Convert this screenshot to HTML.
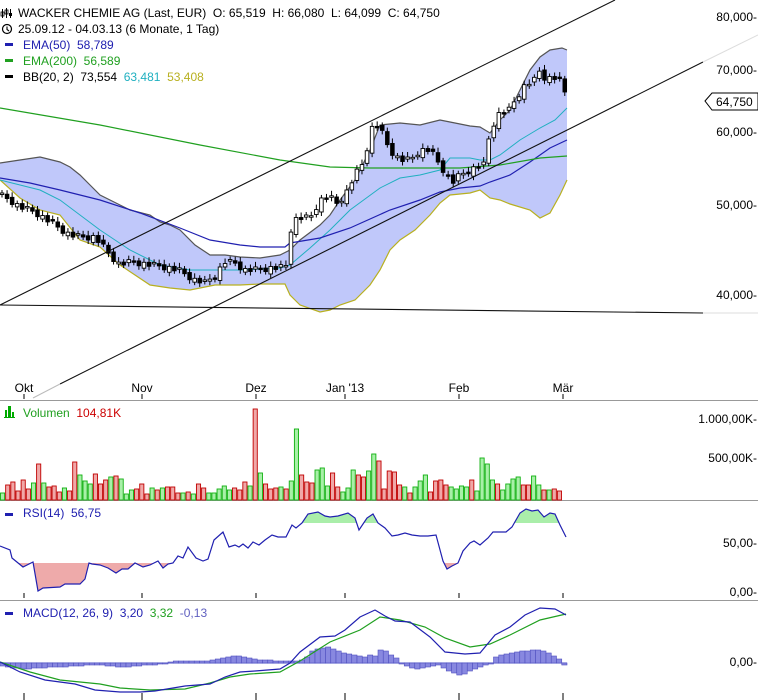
<!DOCTYPE html>
<html><head><meta charset="utf-8"><style>
html,body{margin:0;padding:0;background:#fff;width:758px;height:700px;overflow:hidden}
svg{display:block;font-family:"Liberation Sans",sans-serif;font-size:12px}
</style></head><body>
<svg id="s" width="758" height="700" viewBox="0 0 758 700" xmlns="http://www.w3.org/2000/svg">
<defs>
<clipPath id="cr"><rect x="0" y="563" width="758" height="40"/></clipPath>
<clipPath id="cg"><rect x="0" y="500" width="758" height="23"/></clipPath>
</defs>
<path fill="#c0c8fa" stroke="none" d="M0,163 L20,160 40,157 60,162 70,167 80,175 90,185 100,195 110,200 130,210 150,215 160,222 170,225 180,230 195,245 210,255 225,255 240,257 260,258 280,255 290,250 300,240 320,225 330,215 340,200 355,180 370,150 380,125 400,123 420,125 440,120 450,122 470,126 480,127 490,133 500,120 510,110 520,90 530,70 540,57 550,50 562,48 567,50 L567,180 560,195 550,213 540,218 530,210 510,204 500,200 490,198 480,190 470,193 460,194 450,195 440,203 430,215 415,230 400,240 390,250 380,270 370,285 355,300 340,305 330,310 320,312 300,305 290,295 285,284 260,284 240,285 215,285 200,288 190,290 170,288 150,285 135,275 120,265 100,247 80,240 60,215 40,210 20,198 0,180 Z"/>
<polyline fill="none" stroke="#555" stroke-width="1.2" points="0,163 20,160 40,157 60,162 70,167 80,175 90,185 100,195 110,200 130,210 150,215 160,222 170,225 180,230 195,245 210,255 225,255 240,257 260,258 280,255 290,250 300,240 320,225 330,215 340,200 355,180 370,150 380,125 400,123 420,125 440,120 450,122 470,126 480,127 490,133 500,120 510,110 520,90 530,70 540,57 550,50 562,48 567,50"/>
<polyline fill="none" stroke="#b8b020" stroke-width="1.2" points="0,180 20,198 40,210 60,215 80,240 100,247 120,265 135,275 150,285 170,288 190,290 200,288 215,285 240,285 260,284 285,284 290,295 300,305 320,312 330,310 340,305 355,300 370,285 380,270 390,250 400,240 415,230 430,215 440,203 450,195 460,194 470,193 480,190 490,198 500,200 510,204 530,210 540,218 550,213 560,195 567,180"/>
<polyline fill="none" stroke="#20b0c0" stroke-width="1" points="0,180 40,190 60,200 100,230 130,250 160,265 190,270 210,270 240,270 280,268 290,265 310,248 330,230 350,210 380,188 400,178 420,175 440,170 450,158 470,158 480,160 490,160 500,155 520,140 540,128 555,120 567,108"/>
<polyline fill="none" stroke="#2020b0" stroke-width="1.2" points="0,178 30,183 60,190 100,200 140,213 180,228 210,240 240,245 260,247 285,247 290,243 320,238 350,228 390,210 420,200 440,192 460,188 480,186 490,182 510,175 530,162 550,148 567,140"/>
<polyline fill="none" stroke="#20a020" stroke-width="1.2" points="0,108 100,125 200,145 280,160 330,167 370,168 420,168 460,168 500,165 540,158 567,156"/>
<g id="candles"></g>
<line x1="0" y1="305" x2="615" y2="0" stroke="#111" stroke-width="1.1"/>
<line x1="60" y1="384" x2="703" y2="62" stroke="#111" stroke-width="1.1"/>
<line x1="33" y1="398" x2="60" y2="384" stroke="#bbb" stroke-width="1"/>
<line x1="703" y1="62" x2="758" y2="35" stroke="#ddd" stroke-width="1"/>
<line x1="0" y1="305" x2="703" y2="313" stroke="#111" stroke-width="1.1"/>
<line x1="703" y1="313" x2="758" y2="313" stroke="#ddd" stroke-width="1"/>
<g fill="#000">
<rect x="2" y="9" width="1" height="9"/><rect x="1" y="12" width="3" height="4" fill="none" stroke="#000" stroke-width="0.8"/>
<rect x="6" y="8" width="1" height="10"/><rect x="5" y="10" width="3" height="4" fill="none" stroke="#000" stroke-width="0.8"/>
<rect x="10" y="9" width="1" height="9"/><rect x="9" y="13" width="3" height="3"/>
<text x="18" y="17" xml:space="preserve">WACKER CHEMIE AG (Last, EUR)  O: 65,519  H: 66,080  L: 64,099  C: 64,750</text>
<circle cx="7" cy="29" r="4.5" fill="none" stroke="#000" stroke-width="1.2"/><path d="M7,26.5V29.5L9,31" fill="none" stroke="#000" stroke-width="1.1"/>
<text x="18" y="33">25.09.12 - 04.03.13 (6 Monate, 1 Tag)</text>
</g>
<rect x="5" y="43" width="8" height="3" fill="#2020b0"/><text x="23" y="49" fill="#2020b0" xml:space="preserve">EMA(50)  58,789</text>
<rect x="5" y="59" width="8" height="3" fill="#20a020"/><text x="23" y="65" fill="#20a020" xml:space="preserve">EMA(200)  56,589</text>
<rect x="5" y="75" width="8" height="3" fill="#000"/><text x="23" y="81" fill="#000" xml:space="preserve">BB(20, 2)  73,554  <tspan fill="#20b0c0">63,481</tspan>  <tspan fill="#b8b020">53,408</tspan></text>
<g text-anchor="end" fill="#000">
<text x="757" y="21">80,000-</text>
<text x="757" y="74">70,000-</text>
<text x="757" y="136">60,000-</text>
<text x="757" y="209">50,000-</text>
<text x="757" y="299">40,000-</text>
</g>
<path d="M705,101 L712,93 L758,93 L758,110 L712,110 Z" fill="#fff" stroke="#000" stroke-width="1"/>
<text x="716" y="106">64,750</text>
<g fill="#000" text-anchor="middle">
<text x="24" y="392">Okt</text><text x="142" y="392">Nov</text><text x="256" y="392">Dez</text><text x="345" y="392">Jan '13</text><text x="459" y="392">Feb</text><text x="563" y="392">Mär</text>
</g>
<g stroke="#000" stroke-width="1">
<line x1="24" y1="394" x2="24" y2="399"/><line x1="142" y1="394" x2="142" y2="399"/><line x1="256" y1="394" x2="256" y2="399"/><line x1="345" y1="394" x2="345" y2="399"/><line x1="459" y1="394" x2="459" y2="399"/><line x1="563" y1="394" x2="563" y2="399"/>
<line x1="24" y1="593" x2="24" y2="598"/><line x1="142" y1="593" x2="142" y2="598"/><line x1="256" y1="593" x2="256" y2="598"/><line x1="345" y1="593" x2="345" y2="598"/><line x1="459" y1="593" x2="459" y2="598"/><line x1="563" y1="593" x2="563" y2="598"/>
<line x1="24" y1="693" x2="24" y2="700"/><line x1="142" y1="693" x2="142" y2="700"/><line x1="256" y1="693" x2="256" y2="700"/><line x1="345" y1="693" x2="345" y2="700"/><line x1="459" y1="693" x2="459" y2="700"/><line x1="563" y1="693" x2="563" y2="700"/>
</g>
<line x1="0" y1="400.5" x2="758" y2="400.5" stroke="#999" stroke-width="1"/>
<line x1="0" y1="500.5" x2="758" y2="500.5" stroke="#999" stroke-width="1"/>
<line x1="0" y1="600.5" x2="758" y2="600.5" stroke="#999" stroke-width="1"/>
<g fill="#0a0"><rect x="5" y="410" width="2" height="8"/><rect x="8" y="406" width="3" height="12"/><rect x="12" y="412" width="2" height="6"/><rect x="4" y="417" width="11" height="1"/></g>
<text x="23" y="417" fill="#20a020" xml:space="preserve">Volumen  <tspan fill="#c00">104,81K</tspan></text>
<g text-anchor="end" fill="#000"><text x="757" y="423">1.000,00K-</text><text x="757" y="462">500,00K-</text></g>
<g id="vol"></g>
<rect x="5" y="513" width="8" height="3" fill="#2020b0"/><text x="23" y="517" fill="#2020b0" xml:space="preserve">RSI(14)  56,75</text>
<g text-anchor="end" fill="#000"><text x="757" y="547">50,00-</text><text x="757" y="596">0,00-</text></g>
<g id="rsi"></g>
<rect x="5" y="612" width="8" height="3" fill="#2020b0"/><text x="23" y="617" fill="#2020b0" xml:space="preserve">MACD(12, 26, 9)  3,20  <tspan fill="#20a020">3,32</tspan>  <tspan fill="#6060c0">-0,13</tspan></text>
<g text-anchor="end" fill="#000"><text x="757" y="666">0,00-</text></g>
<line x1="0" y1="663" x2="567" y2="663" stroke="#c8ccf0" stroke-width="2"/>
<g id="hist"></g>
<polyline fill="none" stroke="#20a020" stroke-width="1.2" points="0,662 30,672 60,680 100,684 120,688 150,690 185,689 210,683 230,677 250,674 280,672 300,661 330,642 360,630 380,617 400,620 425,627 445,638 470,647 490,644 510,635 540,620 566,614"/>
<polyline fill="none" stroke="#2020b0" stroke-width="1.2" points="0,662 20,672 45,680 75,684 95,690 120,692 140,692 155,691 185,686 210,684 225,677 240,672 255,671 280,669 290,663 300,652 320,637 335,636 345,630 360,617 375,610 385,616 395,621 410,622 430,637 445,652 465,654 480,653 495,635 510,627 525,615 540,608 555,609 566,615"/>
</svg>
<script>
(function(){
var NS="http://www.w3.org/2000/svg";
function el(p,t,a){var e=document.createElementNS(NS,t);for(var k in a)e.setAttribute(k,a[k]);p.appendChild(e);return e;}
function interp(pts,x){for(var q=1;q<pts.length;q++){if(x<=pts[q][0]){var a=pts[q-1],b=pts[q];return a[1]+(b[1]-a[1])*(x-a[0])/(b[0]-a[0]);}}return pts[pts.length-1][1];}
var step=5.07;
var cl=[[0,195],[10,200],[20,207],[35,212],[50,222],[70,235],[80,237],[95,237],[110,255],[120,265],[125,263],[135,262],[150,265],[160,266],[170,268],[180,271],[195,280],[205,283],[215,275],[225,262],[235,263],[245,270],[255,270],[270,268],[280,268],[287,265],[292,220],[300,218],[310,218],[320,200],[330,196],[335,205],[345,195],[355,175],[365,160],[370,130],[375,125],[380,128],[385,140],[390,150],[400,160],[410,160],[420,150],[430,150],[440,165],[447,175],[453,182],[460,175],[470,170],[480,165],[485,165],[490,130],[500,112],[510,110],[515,100],[525,85],[535,80],[540,70],[545,78],[555,78],[562,82],[567,100]];
var cg=document.getElementById("candles");
var prev=interp(cl,2);
for(var i=0;i<112;i++){var x=2+i*step;var c=interp(cl,x)+((i*7)%5-2)*1.5;var o=prev+((i*3)%5-2)*1.2;var top=Math.min(o,c),bot=Math.max(o,c);if(bot-top<1.5)bot=top+1.5;
el(cg,"line",{x1:x,y1:top-3-(i%3),x2:x,y2:bot+3+(i%2),stroke:"#000","stroke-width":1});
el(cg,"rect",{x:x-1.8,y:top,width:3.6,height:bot-top,fill:(c<o)?"#fff":"#000",stroke:"#000","stroke-width":0.9});prev=c;}
var vs="7g15r18r9r20r11r17g36r17g13r14r8r12g9r38r25g19g16g26r16r20r23g24r21g6g10g11r16r6r12g10r12g13r13r7r7g8r6g16r12r7g7g11g14g10g12r10r18r14g91r27g16r11r12r13g11r19g71g25r18r17r30g32g14g27r13r8g12g30g25r23r29g46g39r11r29r28r15r13g7r13g19g25g8r19r20r15r13g11g14g13g20r9g42g36g20g16r10g16g21g23g15r15r24g15g10r10g11r9r";
var re=/(\d+)([rg])/g,m,arr=[];
while((m=re.exec(vs)))arr.push([+m[1],m[2]]);
var vst=562/arr.length,vg=document.getElementById("vol");
for(var j=0;j<arr.length;j++){var h=arr[j][0];var xx=j*vst;el(vg,"rect",{x:xx+0.5,y:500-h,width:vst-1,height:h,fill:arr[j][1]=="r"?"#f0a8a8":"#a8f0a8",stroke:arr[j][1]=="r"?"#c00000":"#10b010","stroke-width":0.9});}
var rp="0,546 10,550 12,558 23,567 33,562 38,591 43,588 60,587 65,584 80,584 85,579 89,563 92,564 100,565 108,568 116,573 122,569 128,569 135,563 143,567 150,565 158,561 163,568 168,564 173,563 178,556 183,558 188,547 196,558 203,561 208,559 214,540 223,532 229,547 235,545 239,547 243,544 248,548 253,542 259,545 265,540 272,535 278,537 286,537 292,525 296,528 302,523 308,514 318,512 325,516 330,517 338,516 348,513 355,518 359,530 367,518 373,514 378,523 385,528 392,536 398,535 405,533 412,535 420,536 428,536 436,535 443,561 447,569 452,566 458,563 463,551 470,543 474,541 480,545 488,538 493,532 500,532 506,532 512,527 520,513 526,509 532,511 538,510 544,517 550,513 555,514 560,525 566,537";
var rg=document.getElementById("rsi");
el(rg,"path",{d:"M0,563 L"+rp+" L566,563 Z",fill:"#eeaaaa","clip-path":"url(#cr)"});
el(rg,"path",{d:"M0,523 L"+rp+" L566,523 Z",fill:"#aaeeaa","clip-path":"url(#cg)"});
el(rg,"polyline",{points:rp,fill:"none",stroke:"#2020b0","stroke-width":1.2});
var hs=[-3,-4,-5,-5,-6,-6,-5,-5,-5,-4,-4,-4,-4,-3,-3,-3,-2,-2,-2,-2,-3,-3,-4,-4,-4,-3,-3,-2,-2,-2,-1,0,1,2,2,2,2,2,2,2,3,4,5,6,7,7,6,5,4,3,3,3,2,2,2,2,2,3,6,12,14,15,16,14,12,10,9,8,7,6,8,7,13,12,8,5,0,-3,-5,-6,-5,-4,-3,-2,-5,-8,-10,-12,-11,-8,-6,-4,-2,0,6,8,9,10,11,12,12,13,13,12,10,7,4,-2];
var hst=567/hs.length,hg=document.getElementById("hist");
for(var k=0;k<hs.length;k++){var v=hs[k];var hx=k*hst;var y=v>0?663-v:663;var hh=Math.max(Math.abs(v),1);el(hg,"rect",{x:hx,y:y,width:hst,height:hh,fill:"#8888e0",stroke:"#5050c0","stroke-width":0.6});}
})();
</script>
</body></html>
